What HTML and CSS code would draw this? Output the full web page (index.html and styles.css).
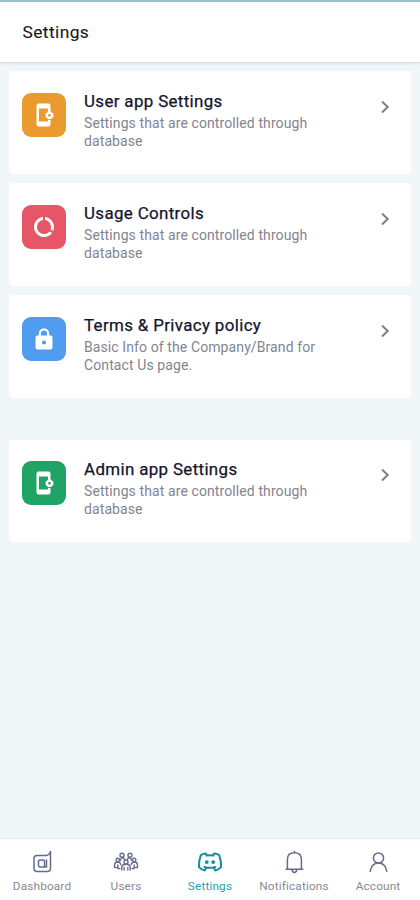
FILE: index.html
```html
<!DOCTYPE html>
<html lang="en">
<head>
<meta charset="utf-8">
<title>Settings</title>
<link rel="stylesheet" href="styles.css">
</head>
<body>
<svg class="defs" aria-hidden="true">
  <symbol id="phone" viewBox="0 0 20 24">
    <path fill-rule="evenodd" d="M4.500.5h10q2 0 2 2v6a4.200 4.200 0 0 0-2.500.5V5.500H5v13h9v-2a4.200 4.200 0 0 0 2.500.5v4.500q0 2-2 2h-10q-2 0-2-2v-19q0-2 2-2z"/>
    <path fill-rule="evenodd" d="M13.800 8.500h3.400l.7 1.200 1.500.8v3.600l-1.500.8-.7 1.200h-3.400l-.7-1.200-1.400-.8v-3.600l1.400-.8zM15.500 10.900a1.400 1.400 0 1 0 0 2.800 1.400 1.400 0 1 0 0-2.800z"/>
  </symbol>
  <symbol id="chevron" viewBox="0 0 12 16">
    <path d="M3 2.500 8.700 8 3 13.500"/>
  </symbol>
</svg>
<div class="app">
  <header class="header"><h1>Settings</h1></header>
  <main class="content">
    <section class="card">
      <div class="tile orange"><svg class="phone"><use href="#phone"/></svg></div>
      <div class="text"><h2>User app Settings</h2><p>Settings that are controlled through database</p></div>
      <svg class="chevron"><use href="#chevron"/></svg>
    </section>
    <section class="card">
      <div class="tile red">
        <svg class="ring" viewBox="0 0 24 24"><path d="M13 2.050v3.030c3.390.490 6 3.390 6 6.920 0 .900-.180 1.750-.480 2.540l2.600 1.530c.560-1.240.880-2.620.880-4.070 0-5.180-3.950-9.450-9-9.950zM12 19c-3.870 0-7-3.130-7-7 0-3.530 2.610-6.430 6-6.920V2.050c-5.060.500-9 4.760-9 9.950 0 5.520 4.470 10 9.990 10 3.310 0 6.240-1.610 8.060-4.090l-2.600-1.530C16.170 17.980 14.210 19 12 19z"/></svg>
      </div>
      <div class="text"><h2>Usage Controls</h2><p>Settings that are controlled through database</p></div>
      <svg class="chevron"><use href="#chevron"/></svg>
    </section>
    <section class="card">
      <div class="tile blue">
        <svg class="lock" viewBox="0 0 18 24"><path fill-rule="evenodd" d="M3.800 8.600V6.500a5.200 5.200 0 0 1 10.400 0v2.100h1.300q2 0 2 2v9.900q0 2-2 2h-13q-2 0-2-2v-9.900q0-2 2-2zM5.900 8.600h6.200V6.500a3.100 3.100 0 0 0-6.200 0zM9 13.400a2.100 2.100 0 1 0 0 4.200 2.100 2.100 0 1 0 0-4.200z"/></svg>
      </div>
      <div class="text"><h2>Terms &amp; Privacy policy</h2><p>Basic Info of the Company/Brand for Contact Us page.</p></div>
      <svg class="chevron"><use href="#chevron"/></svg>
    </section>
    <section class="card admin">
      <div class="tile green"><svg class="phone"><use href="#phone"/></svg></div>
      <div class="text"><h2>Admin app Settings</h2><p>Settings that are controlled through database</p></div>
      <svg class="chevron"><use href="#chevron"/></svg>
    </section>
  </main>
  <nav class="nav">
    <a class="item">
      <svg viewBox="0 0 28 24"><path d="M22.500 1.500v17q0 3-3 3H9q-3 0-3-3V8.500q0-3 3-3h9q3 0 4.500-4z"/><path d="M18.500 17v-7M18.500 17H12q-1.500 0-1.500-1.500v-4q0-1.500 1.500-1.500h3q1.500 0 1.500 1.500V17"/></svg>
      <span>Dashboard</span>
    </a>
    <a class="item">
      <svg class="users" viewBox="0 0 28 24"><circle cx="10" cy="5.200" r="2"/><circle cx="18" cy="5.200" r="2"/><circle cx="5.800" cy="10" r="1.700"/><circle cx="22.200" cy="10" r="1.700"/><circle cx="14" cy="12" r="2"/><path d="M2.500 17.500v-2q0-3.500 3.300-3.500 2.200 0 3 2.500M2.500 17.500h1.800M5.800 15v3.500h2M25.500 17.500v-2q0-3.500-3.300-3.500-2.200 0-3 2.500M25.500 17.500h-1.800M22.200 15v3.500h-2M8.300 10.500 9.800 7.500q2.200 0 3 2M19.700 10.500l-1.500-3q-2.200 0-3 2M9.800 20v-2.500q0-3.300 4.200-3.300t4.200 3.300V20M12.200 17.500V20M15.800 17.500V20"/></svg>
      <span>Users</span>
    </a>
    <a class="item active">
      <svg viewBox="0 0 28 24"><path d="M10.500 5.500q3.500-.7 7 0M11 5.600 9.900 3.500Q6.800 3.500 4.800 5.200 2.800 10.500 3 17.200q2.500 2.800 5.800 3.200l1.500-3q3.700.6 7.400 0l1.500 3q3.300-.4 5.800-3.200.2-6.700-1.800-12-2-1.700-5.100-1.700L17 5.600M8.500 17l2 .4M19.500 17l-2 .4"/><path class="eyes" d="M10.800 10.200a1.900 1.900 0 1 0 0 3.800 1.900 1.900 0 1 0 0-3.800zM17.200 10.200a1.900 1.900 0 1 0 0 3.800 1.900 1.900 0 1 0 0-3.800z"/></svg>
      <span>Settings</span>
    </a>
    <a class="item">
      <svg viewBox="0 0 28 24"><path d="M14.400 2.700V1.500M7.400 18.800v-9.300q0-6.700 7-6.700t7 6.700v9.300M6 19.200h16.800M12 19.600q.3 2.800 2.400 2.800t2.400-2.800"/></svg>
      <span>Notifications</span>
    </a>
    <a class="item">
      <svg viewBox="0 0 28 24"><circle cx="14.500" cy="8" r="5.100"/><path d="M6.200 21.300q1.500-8.200 8.300-8.200t8.300 8.200"/></svg>
      <span>Account</span>
    </a>
  </nav>
</div>
</body>
</html>
```
FILE: styles.css
```css
* { box-sizing: border-box; }
body { margin: 0; font-family: Roboto, "Liberation Sans", sans-serif; background: #f1f6f9; }
h1, h2, p { margin: 0; }
.defs { display: none; }
.app { height: 900px; display: flex; flex-direction: column; }
.header {
  height: 63px;
  flex: none;
  padding: 21px 22.5px 0;
  background: #fff;
  border-top: 2px solid #92c5c7;
  border-bottom: 1px solid #dce0e2;
  box-shadow: 0 1px 2px #dfe3e6;
}
.header h1 { font-size: 17.4px; line-height: 18px; font-weight: 400; color: #17171b; letter-spacing: .4px; -webkit-text-stroke: .1px; }
.content { flex: 1; padding: 8px 9px 0; display: flex; flex-direction: column; gap: 9px; }
.card {
  height: 103px;
  display: flex;
  align-items: flex-start;
  padding: 22px 20px 0 13px;
  background: #fff;
  border-radius: 4px;
}
.admin { margin-top: 33px; height: 102px; padding-top: 21px; }
.tile { width: 44px; height: 44px; flex: none; border-radius: 9px; display: flex; align-items: center; justify-content: center; }
.orange { background: #eb9b2d; }
.red { background: #e65667; }
.blue { background: #4f9cf1; }
.green { background: #20a466; }
.tile svg { fill: #fff; }
.phone { width: 20px; height: 24px; }
.ring { width: 24px; height: 24px; }
.lock { width: 18px; height: 24px; }
.text { margin: -2px 0 0 18px; flex: 1; }
.text h2 { font-size: 16.9px; line-height: 20px; font-weight: 400; color: #14142b; -webkit-text-stroke: .25px; white-space: nowrap; letter-spacing: .36px; }
.text p { width: 250px; margin-top: 4px; font-size: 14px; line-height: 17.500px; color: #7f8591; letter-spacing: .1px; }
.chevron { width: 12px; height: 16px; margin: 5.500px 0 0; flex: none; fill: none; stroke: #7d7f83; stroke-width: 2; }
.nav { height: 62px; flex: none; display: grid; grid-template-columns: repeat(5, 84px); background: #fff; border-top: 1px solid #e7e9ee; }
.item { display: flex; flex-direction: column; align-items: center; padding-top: 11px; color: #888b93; }
.item svg { width: 28px; height: 24px; fill: none; stroke: #666d8c; stroke-width: 1.500; stroke-linejoin: round; stroke-linecap: round; }
.item .users { stroke-width: 1.400; }
.item span { font-size: 11.8px; line-height: 14px; margin-top: 5px; letter-spacing: .15px; }
.active { color: #2ba1aa; }
.item.active svg { stroke: #168d9b; stroke-width: 2; }
.item .eyes { fill: #168d9b; stroke: none; }
```
